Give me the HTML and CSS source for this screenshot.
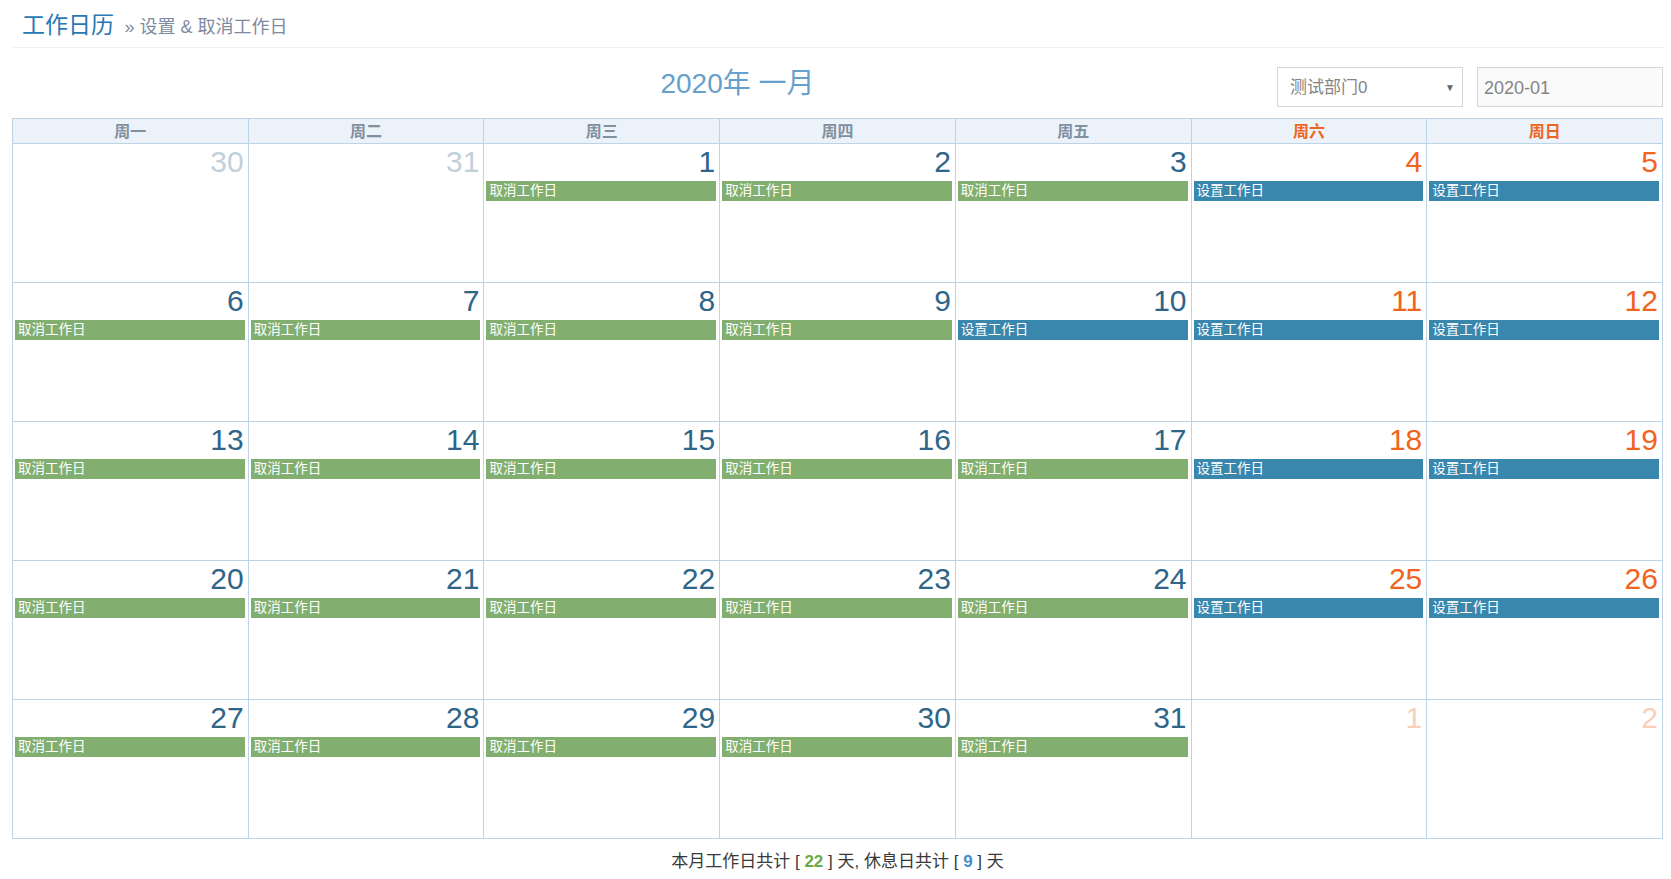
FILE: index.html
```html
<!DOCTYPE html>
<html lang="zh-CN">
<head>
<meta charset="utf-8">
<title>工作日历</title>
<link rel="stylesheet" href="styles.css">
</head>
<body>
<div class="page">
  <div class="page-header">
    <h1>工作日历 <small>» 设置 &amp; 取消工作日</small></h1>
  </div>

  <div class="toolbar">
    <h2 class="month-title">2020年 一月</h2>
    <div class="controls">
      <div class="select">测试部门0<span class="caret">▼</span></div>
      <div class="date-input">2020-01</div>
    </div>
  </div>

  <div class="calendar">
    <div class="th">周一</div>
    <div class="th">周二</div>
    <div class="th">周三</div>
    <div class="th">周四</div>
    <div class="th">周五</div>
    <div class="th weekend">周六</div>
    <div class="th weekend">周日</div>

    <div class="day other"><div class="num">30</div></div>
    <div class="day other"><div class="num">31</div></div>
    <div class="day"><div class="num">1</div><div class="ev cancel">取消工作日</div></div>
    <div class="day"><div class="num">2</div><div class="ev cancel">取消工作日</div></div>
    <div class="day"><div class="num">3</div><div class="ev cancel">取消工作日</div></div>
    <div class="day weekend"><div class="num">4</div><div class="ev set">设置工作日</div></div>
    <div class="day weekend"><div class="num">5</div><div class="ev set">设置工作日</div></div>

    <div class="day"><div class="num">6</div><div class="ev cancel">取消工作日</div></div>
    <div class="day"><div class="num">7</div><div class="ev cancel">取消工作日</div></div>
    <div class="day"><div class="num">8</div><div class="ev cancel">取消工作日</div></div>
    <div class="day"><div class="num">9</div><div class="ev cancel">取消工作日</div></div>
    <div class="day"><div class="num">10</div><div class="ev set">设置工作日</div></div>
    <div class="day weekend"><div class="num">11</div><div class="ev set">设置工作日</div></div>
    <div class="day weekend"><div class="num">12</div><div class="ev set">设置工作日</div></div>

    <div class="day"><div class="num">13</div><div class="ev cancel">取消工作日</div></div>
    <div class="day"><div class="num">14</div><div class="ev cancel">取消工作日</div></div>
    <div class="day"><div class="num">15</div><div class="ev cancel">取消工作日</div></div>
    <div class="day"><div class="num">16</div><div class="ev cancel">取消工作日</div></div>
    <div class="day"><div class="num">17</div><div class="ev cancel">取消工作日</div></div>
    <div class="day weekend"><div class="num">18</div><div class="ev set">设置工作日</div></div>
    <div class="day weekend"><div class="num">19</div><div class="ev set">设置工作日</div></div>

    <div class="day"><div class="num">20</div><div class="ev cancel">取消工作日</div></div>
    <div class="day"><div class="num">21</div><div class="ev cancel">取消工作日</div></div>
    <div class="day"><div class="num">22</div><div class="ev cancel">取消工作日</div></div>
    <div class="day"><div class="num">23</div><div class="ev cancel">取消工作日</div></div>
    <div class="day"><div class="num">24</div><div class="ev cancel">取消工作日</div></div>
    <div class="day weekend"><div class="num">25</div><div class="ev set">设置工作日</div></div>
    <div class="day weekend"><div class="num">26</div><div class="ev set">设置工作日</div></div>

    <div class="day"><div class="num">27</div><div class="ev cancel">取消工作日</div></div>
    <div class="day"><div class="num">28</div><div class="ev cancel">取消工作日</div></div>
    <div class="day"><div class="num">29</div><div class="ev cancel">取消工作日</div></div>
    <div class="day"><div class="num">30</div><div class="ev cancel">取消工作日</div></div>
    <div class="day"><div class="num">31</div><div class="ev cancel">取消工作日</div></div>
    <div class="day weekend other"><div class="num">1</div></div>
    <div class="day weekend other"><div class="num">2</div></div>
  </div>

  <div class="summary">本月工作日共计 [ <b class="green">22</b> ] 天, 休息日共计 [ <b class="blue">9</b> ] 天</div>
</div>
</body>
</html>
```

FILE: styles.css
```css
* { box-sizing: border-box; }

html, body {
  margin: 0;
  padding: 0;
  background: #fff;
}

body {
  font-family: "Liberation Sans", "Noto Sans CJK SC", sans-serif;
  color: #393939;
}

.page {
  padding: 0 8px 0 12px;
}

.page-header {
  padding: 10px 0 7px 10px;
  border-bottom: 1px dotted #e2e2e2;
  height: 48px;
}

.page-header h1 {
  margin: 0;
  font-weight: normal;
  font-size: 23px;
  line-height: 30px;
  color: #2679b5;
}

.page-header small {
  font-size: 18px;
  color: #8089a0;
  margin-left: 4px;
}

.toolbar {
  display: flex;
  align-items: center;
  margin-top: 19px;
  height: 40px;
}

.month-title {
  flex: 1;
  margin: 0;
  padding-left: 186px;
  text-align: center;
  font-weight: normal;
  font-size: 28px;
  line-height: 30px;
  color: #65a0ce;
  position: relative;
  top: -3px;
}

.controls {
  display: flex;
  gap: 14px;
}

.select, .date-input {
  width: 186px;
  height: 40px;
  border: 1px solid #d5d5d5;
  font-size: 17px;
  line-height: 38px;
  color: #858585;
}

.select {
  display: flex;
  justify-content: space-between;
  padding: 1px 7px 0 12px;
  background: #fff;
}

.caret {
  font-size: 10px;
  color: #666;
}

.date-input {
  padding: 1px 0 0 6px;
  font-size: 18px;
  background: #fafafa;
}

.calendar {
  margin-top: 11px;
  width: 1651px;
  display: grid;
  grid-template-columns: repeat(7, 1fr);
  border-top: 1px solid #bcd4e5;
  border-left: 1px solid #bcd4e5;
}

.th {
  height: 25px;
  background: #ecf2f9;
  border-right: 1px solid #bcd4e5;
  border-bottom: 1px solid #bcd4e5;
  text-align: center;
  font-size: 16px;
  line-height: 25px;
  font-weight: bold;
  color: #8090a0;
}

.th.weekend { color: #ee6521; }

.day {
  height: 139px;
  border-right: 1px solid #bcd4e5;
  border-bottom: 1px solid #bcd4e5;
  padding: 1px 3px 0 2px;
}

.num {
  text-align: right;
  font-size: 30px;
  line-height: 33px;
  padding-right: 1px;
  color: #2e6589;
}

.day.weekend .num { color: #f0641e; }
.day.other .num { opacity: 0.3; }

.ev {
  margin-top: 3px;
  height: 20px;
  padding-left: 3px;
  font-size: 13.5px;
  line-height: 20px;
  color: #fff;
}

.ev.cancel { background: #82af6f; }
.ev.set { background: #3a87ad; }

.summary {
  width: 1651px;
  margin-top: 13px;
  text-align: center;
  font-size: 17px;
  line-height: 20px;
  color: #393939;
}

.summary b { font-weight: bold; }
.green { color: #69aa46; }
.blue { color: #478fca; }
```
